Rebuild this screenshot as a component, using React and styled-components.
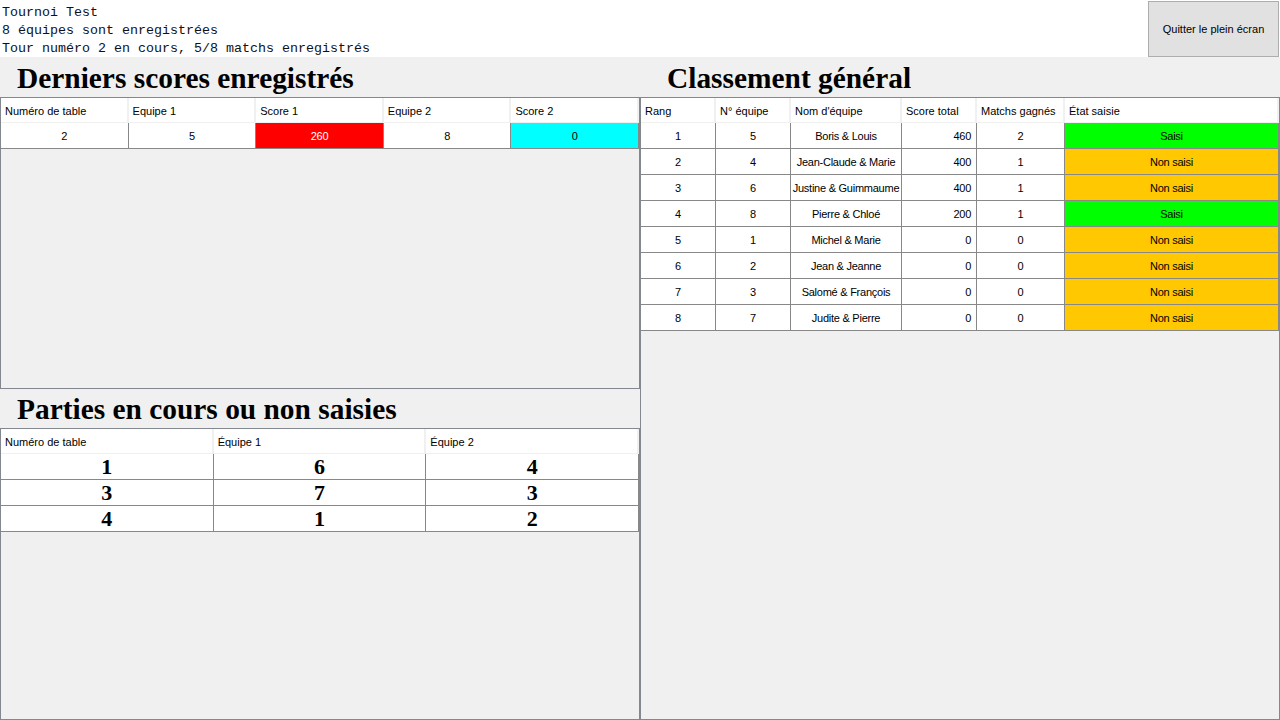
import styled, { createGlobalStyle } from "styled-components";

const GlobalStyle = createGlobalStyle`
  html, body {
    margin: 0;
    padding: 0;
    background: #f0f0f0;
  }
  * {
    box-sizing: border-box;
  }
`;

const lastScores = [{ table: 2, team1: 5, score1: 260, team2: 8, score2: 0 }];

const pending = [
  [1, 6, 4],
  [3, 7, 3],
  [4, 1, 2],
];

const ranking = [
  [1, 5, "Boris & Louis", 460, 2, true],
  [2, 4, "Jean-Claude & Marie", 400, 1, false],
  [3, 6, "Justine & Guimmaume", 400, 1, false],
  [4, 8, "Pierre & Chloé", 200, 1, true],
  [5, 1, "Michel & Marie", 0, 0, false],
  [6, 2, "Jean & Jeanne", 0, 0, false],
  [7, 3, "Salomé & François", 0, 0, false],
  [8, 7, "Judite & Pierre", 0, 0, false],
];

export default function App() {
  return (
    <Page>
      <GlobalStyle />
      <TopBar>
        <InfoText>
          <div>Tournoi Test</div>
          <div>8 équipes sont enregistrées</div>
          <div>Tour numéro 2 en cours, 5/8 matchs enregistrés</div>
        </InfoText>
        <FullscreenButton>Quitter le plein écran</FullscreenButton>
      </TopBar>

      <Main>
        <Column>
          <Title $height={40} $indent={17}>Derniers scores enregistrés</Title>
          <Frame $height={292}>
            <Grid $cols="repeat(5, 1fr)">
              <HeadCell>Numéro de table</HeadCell>
              <HeadCell>Equipe 1</HeadCell>
              <HeadCell>Score 1</HeadCell>
              <HeadCell>Equipe 2</HeadCell>
              <HeadCell>Score 2</HeadCell>
              {lastScores.map((s) => (
                <Row key={s.table}>
                  <Cell>{s.table}</Cell>
                  <Cell>{s.team1}</Cell>
                  <Cell $bg="#ff0000" $color="#ffffff">{s.score1}</Cell>
                  <Cell>{s.team2}</Cell>
                  <Cell $bg="#00ffff">{s.score2}</Cell>
                </Row>
              ))}
            </Grid>
          </Frame>

          <Title $height={39} $indent={17}>Parties en cours ou non saisies</Title>
          <Frame $height={292}>
            <Grid $cols="repeat(3, 1fr)">
              <HeadCell>Numéro de table</HeadCell>
              <HeadCell>Équipe 1</HeadCell>
              <HeadCell>Équipe 2</HeadCell>
              {pending.map((p) => (
                <Row key={p[0]}>
                  <Cell $big>{p[0]}</Cell>
                  <Cell $big>{p[1]}</Cell>
                  <Cell $big>{p[2]}</Cell>
                </Row>
              ))}
            </Grid>
          </Frame>
        </Column>

        <Column>
          <Title $height={40} $indent={27}>Classement général</Title>
          <Frame>
            <Grid $cols="75px 75px 111px 75px 88px 1fr">
              <HeadCell>Rang</HeadCell>
              <HeadCell>N° équipe</HeadCell>
              <HeadCell>Nom d'équipe</HeadCell>
              <HeadCell>Score total</HeadCell>
              <HeadCell>Matchs gagnés</HeadCell>
              <HeadCell>État saisie</HeadCell>
              {ranking.map(([rank, num, name, total, wins, done]) => (
                <Row key={rank}>
                  <Cell>{rank}</Cell>
                  <Cell>{num}</Cell>
                  <Cell>{name}</Cell>
                  <Cell $align="right">{total}</Cell>
                  <Cell>{wins}</Cell>
                  <Cell $bg={done ? "#00ff00" : "#ffc800"}>
                    {done ? "Saisi" : "Non saisi"}
                  </Cell>
                </Row>
              ))}
            </Grid>
          </Frame>
        </Column>
      </Main>
    </Page>
  );
}

const Page = styled.div`
  width: 1280px;
  height: 720px;
  display: flex;
  flex-direction: column;
  background: #f0f0f0;
  overflow: hidden;
`;

const TopBar = styled.div`
  height: 57px;
  display: flex;
  justify-content: space-between;
  align-items: flex-start;
  background: #ffffff;
`;

const InfoText = styled.div`
  padding: 4px 0 0 2px;
  font-family: "Liberation Mono", "Courier New", monospace;
  font-size: 13.33px;
  line-height: 18px;
  color: #111;
  white-space: pre;
`;

const FullscreenButton = styled.button`
  width: 131px;
  height: 56px;
  margin: 1px 1px 0 0;
  padding: 0;
  background: #e1e1e1;
  border: 1px solid #adadad;
  border-radius: 0;
  font-family: "Liberation Sans", Arial, sans-serif;
  font-size: 11px;
  color: #000;
  cursor: pointer;
`;

const Main = styled.div`
  flex: 1;
  display: grid;
  grid-template-columns: 640px 640px;
  min-height: 0;
`;

const Column = styled.div`
  display: flex;
  flex-direction: column;
  min-height: 0;
`;

const Title = styled.div`
  height: ${(p) => p.$height}px;
  padding: 2px 0 0 ${(p) => p.$indent}px;
  display: flex;
  align-items: center;
  font-family: "Liberation Serif", "Times New Roman", serif;
  font-weight: bold;
  font-size: 29.4px;
  color: #000;
  white-space: nowrap;
`;

const Frame = styled.div`
  ${(p) => (p.$height ? `height: ${p.$height}px;` : "flex: 1;")}
  border: 1px solid #828790;
  background: #f0f0f0;
  overflow: hidden;
`;

const Grid = styled.div`
  display: grid;
  grid-template-columns: ${(p) => p.$cols};
`;

const Row = styled.div`
  display: contents;
`;

const HeadCell = styled.div`
  height: 25px;
  padding: 1px 0 0 4px;
  display: flex;
  align-items: center;
  background: #ffffff;
  border-right: 2px solid #f0f0f0;
  border-bottom: 1px solid #f0f0f0;
  font-family: "Liberation Sans", Arial, sans-serif;
  font-size: 11px;
  color: #000;
  white-space: nowrap;
  overflow: hidden;
`;

const Cell = styled.div`
  height: 26px;
  padding: ${(p) => (p.$big ? "1px 2px 0" : "0 5px")};
  display: flex;
  align-items: center;
  justify-content: ${(p) => (p.$align === "right" ? "flex-end" : "center")};
  background: ${(p) => p.$bg || "#ffffff"};
  color: ${(p) => p.$color || "#000"};
  border-right: 1px solid #888888;
  border-bottom: 1px solid #888888;
  font-family: ${(p) =>
    p.$big
      ? `"Liberation Serif", "Times New Roman", serif`
      : `"Liberation Sans", Arial, sans-serif`};
  font-weight: ${(p) => (p.$big ? "bold" : "normal")};
  font-size: ${(p) => (p.$big ? "22px" : "11px")};
  letter-spacing: ${(p) => (p.$big ? "0" : "-0.25px")};
  white-space: nowrap;
  overflow: hidden;
`;
